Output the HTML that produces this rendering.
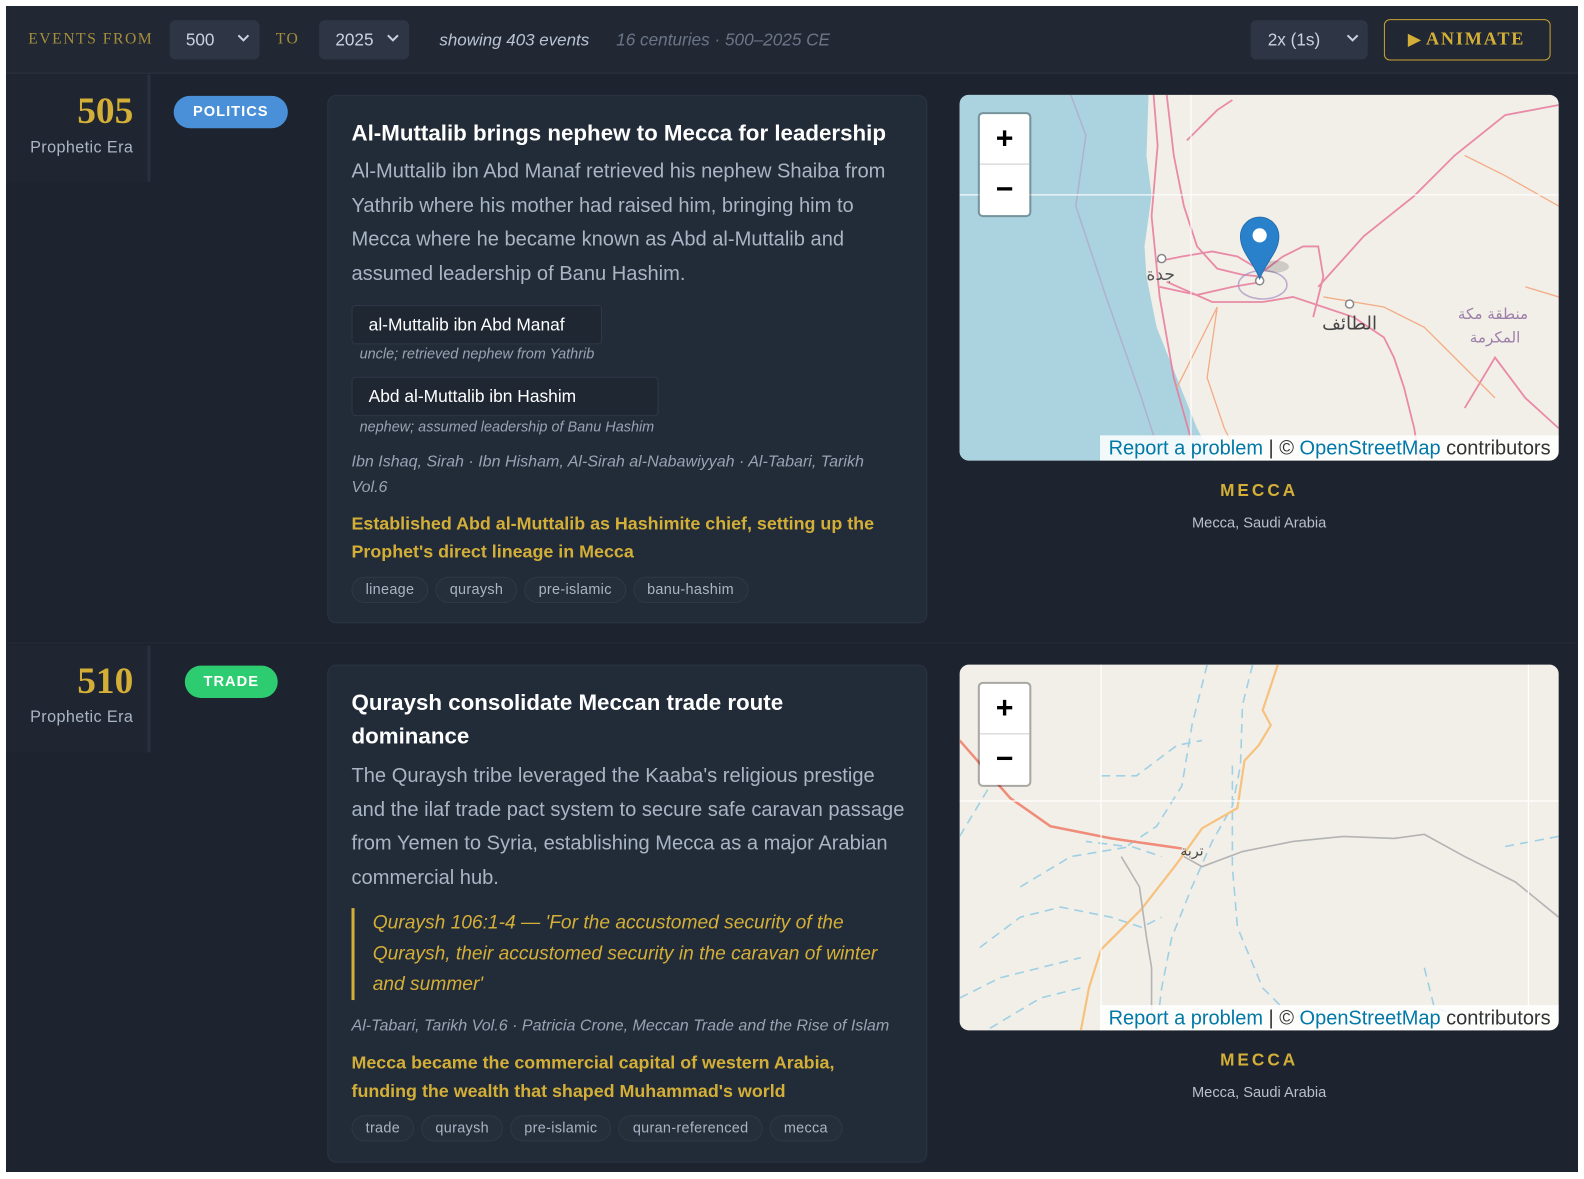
<!DOCTYPE html>
<html><head><meta charset="utf-8">
<style>
*{box-sizing:border-box;margin:0;padding:0}
html,body{width:1584px;height:1179px;background:#fff;overflow:hidden}
body{font-family:"Liberation Sans","Noto Sans CJK SC",sans-serif;position:relative}
.app{position:absolute;left:6px;top:6px;width:1572px;height:1166px;background:#1d242f;overflow:hidden}
.inner{position:absolute;left:0;top:0;width:1556px;height:1154px;transform:scale(1.0102);transform-origin:0 0}
.hdr{position:absolute;left:0;top:0;width:1572px;height:67px;background:#212833;border-bottom:1px solid #2c3440}
.a{position:absolute;white-space:nowrap}
.serif{font-family:"Liberation Serif",serif}
.sel{position:absolute;background:#2e3646;border-radius:6px;color:#c9d2e0;font-size:17px;line-height:39px;height:39px}
.sel svg{position:absolute;top:13px}
.yearcol{position:absolute;left:0;width:143px;background:#1f2631;border-right:3px solid #283140}
.year{position:absolute;font-family:"Liberation Serif",serif;font-weight:bold;font-size:37px;color:#d4af37}
.era{position:absolute;font-size:16px;color:#a9b4c4;letter-spacing:.4px}
.badge{position:absolute;height:32px;border-radius:16px;color:#fff;font-weight:bold;font-size:14.5px;letter-spacing:1px;text-align:center;line-height:32px}
.card{position:absolute;left:318px;width:594px;background:#222b38;border:1px solid #2b3442;border-radius:9px}
.t{position:absolute;left:23px;white-space:nowrap}
.title{color:#fff;font-weight:bold;font-size:22.1px;line-height:33px}
.desc{color:#a9b4c4;font-size:19.9px;line-height:33.5px}
.chip{position:absolute;left:23px;height:39px;border:1px solid #2f3846;border-radius:4px;background:#1f2733;color:#fff;font-size:17.2px;line-height:37px;padding-left:16px}
.role{color:#98a3b4;font-style:italic;font-size:14.3px}
.src{color:#98a3b4;font-style:italic;font-size:15.9px;line-height:25px}
.imp{color:#d4af37;font-weight:bold;font-size:17.7px;line-height:28px}
.tags{position:absolute;left:23px;display:flex;gap:7px}
.tag{height:26px;border:1px solid #2f3846;background:#252e3b;border-radius:13px;color:#a9b4c4;font-size:14.3px;line-height:24px;padding:0 13px;letter-spacing:.3px}
.map{position:absolute;left:944px;width:593px;height:362px;border-radius:9px;overflow:hidden;background:#f2efe9}
.zoomc{position:absolute;left:18px;top:17px;width:53px;height:104px;border:2px solid rgba(0,0,0,.3);border-radius:5px;background:#fff;background-clip:padding-box}
.zoomc div{height:50px;text-align:center;font-size:30px;line-height:50px;color:#000;font-weight:bold}
.attr{position:absolute;right:0;bottom:0;height:25px;background:rgba(255,255,255,.85);font-size:19.8px;line-height:26px;color:#333;padding:0 8px 0 8px;white-space:nowrap}
.attr b{font-weight:normal;color:#0078a8}
.loc{position:absolute;left:944px;width:593px;text-align:center}
.locn{color:#d4af37;font-weight:bold;font-size:17px;letter-spacing:3px}
.locs{color:#b8c0cc;font-size:14.5px}
</style></head><body>
<div class="app"><div class="inner">
 <div class="hdr">
  <div class="a serif" style="left:22px;top:24px;font-size:15.5px;color:#a58d3d;letter-spacing:1.5px">EVENTS FROM</div>
  <div class="sel" style="left:162px;top:14px;width:89px"><span style="margin-left:16px">500</span><svg style="left:66px" width="14" height="10" viewBox="0 0 14 10"><path d="M2 2l5 5 5-5" fill="none" stroke="#c9d2e0" stroke-width="2"/></svg></div>
  <div class="a serif" style="left:267px;top:24px;font-size:15.5px;color:#a58d3d;letter-spacing:1.5px">TO</div>
  <div class="sel" style="left:310px;top:14px;width:89px"><span style="margin-left:16px">2025</span><svg style="left:66px" width="14" height="10" viewBox="0 0 14 10"><path d="M2 2l5 5 5-5" fill="none" stroke="#c9d2e0" stroke-width="2"/></svg></div>
  <div class="a" style="left:429px;top:24px;font-size:16.8px;font-style:italic;color:#b8c4d6">showing 403 events</div>
  <div class="a" style="left:604px;top:24px;font-size:17px;font-style:italic;color:#6b7588">16 centuries · 500–2025 CE</div>
  <div class="sel" style="left:1232px;top:14px;width:116px"><span style="margin-left:17px">2x (1s)</span><svg style="left:94px" width="14" height="10" viewBox="0 0 14 10"><path d="M2 2l5 5 5-5" fill="none" stroke="#c9d2e0" stroke-width="2"/></svg></div>
  <div class="a" style="left:1364px;top:13px;width:165px;height:41px;border:1px solid #c9a330;border-radius:6px"></div>
  <div class="a serif" style="left:1388px;top:22px;font-size:18px;font-weight:bold;color:#d4af37;letter-spacing:1.8px"><span style="font-size:16px;letter-spacing:0">▶</span> ANIMATE</div>
 </div>

 <!-- ROW 1 -->
 <div class="yearcol" style="top:68px;height:106px"></div>
 <div class="year" style="left:0;width:126px;text-align:right;top:83px">505</div>
 <div class="era" style="left:0;width:126px;text-align:right;top:132px">Prophetic Era</div>
 <div class="badge" style="left:166px;top:89px;width:113px;background:#4a90d9">POLITICS</div>
 <div class="card" style="top:88px;height:523px">
  <div class="t title" style="top:20px">Al-Muttalib brings nephew to Mecca for leadership</div>
  <div class="t desc" style="top:59px">Al-Muttalib ibn Abd Manaf retrieved his nephew Shaiba from<br>Yathrib where his mother had raised him, bringing him to<br>Mecca where he became known as Abd al-Muttalib and<br>assumed leadership of Banu Hashim.</div>
  <div class="chip" style="top:207px;width:248px">al-Muttalib ibn Abd Manaf</div>
  <div class="t role" style="left:31px;top:248px">uncle; retrieved nephew from Yathrib</div>
  <div class="chip" style="top:278px;width:304px">Abd al-Muttalib ibn Hashim</div>
  <div class="t role" style="left:31px;top:320px">nephew; assumed leadership of Banu Hashim</div>
  <div class="t src" style="top:350px">Ibn Ishaq, Sirah · Ibn Hisham, Al-Sirah al-Nabawiyyah · Al-Tabari, Tarikh<br>Vol.6</div>
  <div class="t imp" style="top:409px">Established Abd al-Muttalib as Hashimite chief, setting up the<br>Prophet's direct lineage in Mecca</div>
  <div class="tags" style="top:476px"><div class="tag">lineage</div><div class="tag">quraysh</div><div class="tag">pre-islamic</div><div class="tag">banu-hashim</div></div>
 </div>
 <div class="map" style="top:88px">
  <svg width="593" height="362" viewBox="0 0 593 362">
   <path d="M0 0H187L185 60L190 100L183 150L185 180L195 230L215 280L235 330L252 362H0Z" fill="#aad3df"/>
   <path d="M110 0L125 40L115 110L145 200L180 300L200 362" fill="none" stroke="#b0a3c6" stroke-width="1.5" opacity=".7"/>
   <g fill="none" stroke="#e8799c" stroke-width="1.8" opacity=".85">
    <path d="M192 0L196 50L190 120L194 160L198 200L212 280L235 362"/>
    <path d="M205 0L212 60L222 110L235 150L255 172L280 178L300 180"/>
    <path d="M195 165L220 160L250 155L275 160L300 175L320 160L340 150L355 150L360 180L350 220"/>
    <path d="M198 190L235 198L270 190L300 185"/>
    <path d="M205 185L250 205L300 205L330 200L360 210L390 220L420 240L430 260L440 290L450 330L455 362"/>
    <path d="M355 190L400 140L450 100L490 60L540 20L593 10"/>
    <path d="M225 45L240 30L255 15L270 5"/>
    <path d="M500 310L530 260L560 300L593 330"/>
   </g>
   <g fill="none" stroke="#f4a57a" stroke-width="1.3" opacity=".9">
    <path d="M360 200L420 210L460 230L500 270L530 300"/>
    <path d="M255 210L235 250L215 290"/>
    <path d="M255 210L245 280L262 330L278 362"/>
    <path d="M500 60L540 80L593 110"/>
    <path d="M560 190L593 200"/>
   </g>
   <ellipse cx="300" cy="188" rx="24" ry="14" fill="none" stroke="#a78fc0" stroke-width="1.5" opacity=".7"/>
   <path d="M229 0V362M0 99H593" stroke="#fff" stroke-width="1.2" opacity=".9"/>
   <circle cx="200" cy="162" r="4" fill="#fff" stroke="#888" stroke-width="1.5"/>
   <circle cx="386" cy="207" r="4" fill="#fff" stroke="#888" stroke-width="1.5"/>
   <circle cx="297" cy="184" r="4" fill="#fff" stroke="#888" stroke-width="1.5"/>
   <text x="199" y="183" font-size="17" fill="#555" text-anchor="middle" font-family="DejaVu Sans,sans-serif">جدة</text>
   <text x="386" y="232" font-size="18" fill="#444" text-anchor="middle" font-family="DejaVu Sans,sans-serif">الطائف</text>
   <text x="528" y="222" font-size="15" fill="#9d7fa8" text-anchor="middle" font-family="DejaVu Sans,sans-serif">منطقة مكة</text>
   <text x="530" y="245" font-size="15" fill="#9d7fa8" text-anchor="middle" font-family="DejaVu Sans,sans-serif">المكرمة</text>
   <ellipse cx="312" cy="170" rx="14" ry="6" fill="#000" opacity=".15"/>
   <path d="M297 182C291 165 278 156 278 140A19 19 0 0 1 316 140C316 156 303 165 297 182Z" fill="#2a81cb" stroke="#2670b0" stroke-width="1"/>
   <circle cx="297" cy="139" r="7" fill="#fff"/>
  </svg>
  <div class="zoomc"><div style="border-bottom:1px solid #ccc">+</div><div>−</div></div>
  <div class="attr"><b>Report a problem</b> | © <b>OpenStreetMap</b> contributors</div>
 </div>
 <div class="loc locn" style="top:470px">MECCA</div>
 <div class="loc locs" style="top:504px">Mecca, Saudi Arabia</div>

 <div class="a" style="left:0;top:630px;width:1572px;height:1px;background:#242c38"></div>

 <!-- ROW 2 -->
 <div class="yearcol" style="top:633px;height:106px"></div>
 <div class="year" style="left:0;width:126px;text-align:right;top:647px">510</div>
 <div class="era" style="left:0;width:126px;text-align:right;top:696px">Prophetic Era</div>
 <div class="badge" style="left:177px;top:653px;width:92px;background:#2ecc71">TRADE</div>
 <div class="card" style="top:652px;height:493px">
  <div class="t title" style="top:20px">Quraysh consolidate Meccan trade route<br>dominance</div>
  <div class="t desc" style="top:93px">The Quraysh tribe leveraged the Kaaba's religious prestige<br>and the ilaf trade pact system to secure safe caravan passage<br>from Yemen to Syria, establishing Mecca as a major Arabian<br>commercial hub.</div>
  <div class="a" style="left:23px;top:240px;width:3px;height:91px;background:#d4af37"></div>
  <div class="t" style="left:44px;top:240px;color:#d4af37;font-style:italic;font-size:19px;line-height:30.5px">Quraysh 106:1-4 — 'For the accustomed security of the<br>Quraysh, their accustomed security in the caravan of winter<br>and summer'</div>
  <div class="t src" style="top:344px">Al-Tabari, Tarikh Vol.6 · Patricia Crone, Meccan Trade and the Rise of Islam</div>
  <div class="t imp" style="top:379px">Mecca became the commercial capital of western Arabia,<br>funding the wealth that shaped Muhammad's world</div>
  <div class="tags" style="top:445px"><div class="tag">trade</div><div class="tag">quraysh</div><div class="tag">pre-islamic</div><div class="tag">quran-referenced</div><div class="tag">mecca</div></div>
 </div>
 <div class="map" style="top:652px">
  <svg width="593" height="362" viewBox="0 0 593 362">
   <g fill="none" stroke="#9fd0e4" stroke-width="1.6" stroke-dasharray="9 6">
    <path d="M245 0L230 60L220 120L195 160L165 180L125 175"/>
    <path d="M290 0L280 40L278 100L270 140L250 175L230 220L210 270L200 320L195 362"/>
    <path d="M140 110L175 110L215 80L240 75"/>
    <path d="M0 170L30 120L40 100"/>
    <path d="M60 220L110 190L170 180L200 190"/>
    <path d="M20 280L60 250L100 240L150 250L180 260L200 250"/>
    <path d="M0 330L40 310L80 300L120 290"/>
    <path d="M270 100L270 200L275 260L300 320L330 350L360 340"/>
    <path d="M30 360L80 330L120 320"/>
    <path d="M460 300L470 340L520 355L593 345"/>
    <path d="M540 180L593 170"/>
   </g>
   <path d="M0 75L50 132L90 160L150 172L220 182" fill="none" stroke="#f08c7a" stroke-width="2.5"/>
   <path d="M315 0L300 45L308 60L296 80L282 95L275 142L240 162L215 197L180 242L140 282L128 320L120 362" fill="none" stroke="#f6c27e" stroke-width="2.2"/>
   <path d="M160 190L178 220L185 270L190 300L190 362M222 190L240 200L280 185L330 175L380 170L430 172L460 168L500 190L550 215L593 250" fill="none" stroke="#b4b4b4" stroke-width="1.6"/>
   <path d="M140 0V362M563 0V362M0 135H593" stroke="#fff" stroke-width="1.2"/>
   <text x="230" y="189" font-size="14" fill="#444" text-anchor="middle" font-family="DejaVu Sans,sans-serif">تربة</text>
  </svg>
  <div class="zoomc"><div style="border-bottom:1px solid #ccc">+</div><div>−</div></div>
  <div class="attr"><b>Report a problem</b> | © <b>OpenStreetMap</b> contributors</div>
 </div>
 <div class="loc locn" style="top:1034px">MECCA</div>
 <div class="loc locs" style="top:1068px">Mecca, Saudi Arabia</div>
</div></div>
</body></html>
